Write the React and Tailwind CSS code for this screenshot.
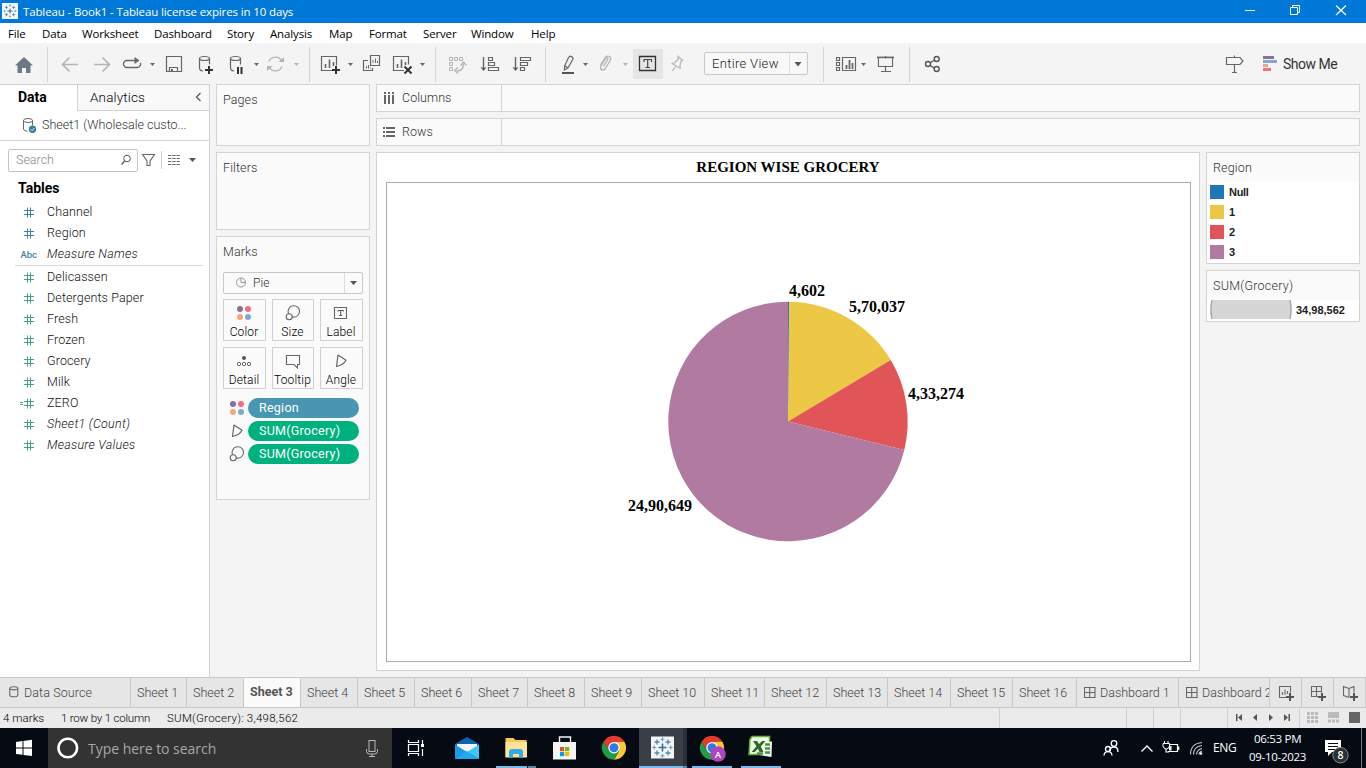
import React from "react";

/* Icon cell: the drawing inside uses window coordinates, x/y give the cell origin. */
function Cell({ x, y, w, h, children, className = "" }) {
  return (
    <svg width={w} height={h} viewBox={`${x} ${y} ${w} ${h}`} className={`block shrink-0 ${className}`} fill="none">
      {children}
    </svg>
  );
}

/* Toolbar cell, as tall as the toolbar. */
function Tool({ x, to, children }) {
  return <Cell x={x} y={43} w={to - x} h={41}>{children}</Cell>;
}

/* Taskbar cell, as tall as the taskbar. */
function Task({ x, to, children, className }) {
  return <Cell x={x} y={728} w={to - x} h={40} className={className}>{children}</Cell>;
}

const Caret = ({ x, y = 63, c = "#666" }) => <path d={`M${x} ${y}h5l-2.5 3z`} fill={c} />;
const Rule = ({ x }) => <path d={`M${x + 0.5} 47v35`} stroke="#d4d4d4" />;

function TableauMark({ x, y, s = 1 }) {
  const plus = (cx, cy, r, c, w = 1) => (
    <path d={`M${cx - r} ${cy}h${2 * r}M${cx} ${cy - r}v${2 * r}`} stroke={c} strokeWidth={w} />
  );
  return (
    <g transform={`translate(${x} ${y}) scale(${s})`}>
      {plus(0, 0, 3.6, "#2f6f9f", 1.4)}
      {plus(0, -7.5, 1.8, "#6f9fc0")}
      {plus(0, 7.5, 1.8, "#6f9fc0")}
      {plus(-7.5, 0, 1.8, "#6f9fc0")}
      {plus(7.5, 0, 1.8, "#6f9fc0")}
      {plus(-5, -5, 2.3, "#4c8bb5", 1.2)}
      {plus(5, -5, 2.3, "#4c8bb5", 1.2)}
      {plus(-5, 5, 2.3, "#4c8bb5", 1.2)}
      {plus(5, 5, 2.3, "#4c8bb5", 1.2)}
    </g>
  );
}

function TitleBar() {
  return (
    <div className="flex h-[23px] items-center bg-[#0078d7] font-['Open_Sans',sans-serif] text-[11.5px] text-white">
      <Cell x={0} y={0} w={23} h={23}>
        <rect x="2" y="3" width="16" height="16" fill="#f6f8fa" />
        <TableauMark x={10} y={11} s={0.72} />
      </Cell>
      <span className="grow whitespace-nowrap tracking-[-0.13px]">Tableau - Book1 - Tableau license expires in 10 days</span>
      <Cell x={1230} y={0} w={136} h={23}>
        <path d="M1245 10.5h10" stroke="#fff" />
        <path d="M1290.5 7.5h7v7h-7zM1292.5 7.500v-2h7v7h-2" stroke="#fff" />
        <path d="M1336 5.500l10 9.500M1346 5.500l-10 9.500" stroke="#fff" strokeWidth="1.200" />
      </Cell>
    </div>
  );
}

function MenuBar() {
  const cls = "shrink-0 whitespace-nowrap";
  return (
    <div className="flex h-5 items-center bg-white pl-2 pt-0.5 font-['Open_Sans',sans-serif] text-[11.5px] tracking-[-0.15px] text-black">
      <span className={`${cls} w-[34px]`}>File</span>
      <span className={`${cls} w-10`}>Data</span>
      <span className={`${cls} w-[72px]`}>Worksheet</span>
      <span className={`${cls} w-[73px]`}>Dashboard</span>
      <span className={`${cls} w-[43px]`}>Story</span>
      <span className={`${cls} w-[59px]`}>Analysis</span>
      <span className={`${cls} w-10`}>Map</span>
      <span className={`${cls} w-[54px]`}>Format</span>
      <span className={`${cls} w-12`}>Server</span>
      <span className={`${cls} w-[60px]`}>Window</span>
      <span className={cls}>Help</span>
    </div>
  );
}

function Toolbar() {
  const d = "#666";
  const l = "#b4b4b4";
  return (
    <div className="flex h-[41px] items-center bg-[#f4f4f4]">
      <Tool x={0} to={55}>
        <path d="M24 57l9 8.500h-2.500v7.500h-4.500v-5h-4v5h-4.500v-7.500H15z" fill="#6b7785" />
        <Rule x={47} />
      </Tool>
      <Tool x={55} to={86}><path d="M62.500 64.500h15.500M69.500 57.500l-7 7 7 7" stroke={l} strokeWidth="1.600" /></Tool>
      <Tool x={86} to={117}><path d="M94 64.500h15.500M102.500 57.500l7 7-7 7" stroke={l} strokeWidth="1.600" /></Tool>
      <Tool x={117} to={160}>
        <path d="M136 60.500h-9a3.500 3.500 0 0 0 0 7h10a3.500 3.500 0 0 0 3.500-4.500" stroke={d} strokeWidth="1.400" />
        <path d="M134.500 57l5 3.500-5 3.500z" fill={d} />
        <Caret x={150} />
      </Tool>
      <Tool x={160} to={190}>
        <path d="M166.500 56.500h15v15h-15zM169.500 71.500v-4h8v4" stroke={d} strokeWidth="1.200" />
        <path d="M171 69h2v2.500h-2z" fill={d} />
      </Tool>
      <Tool x={190} to={222}>
        <path d="M199.500 58.500v9.500q0 2.500 3.500 3M209.500 58.500v6" stroke={d} strokeWidth="1.200" />
        <ellipse cx="204.500" cy="58.500" rx="5" ry="2" stroke={d} strokeWidth="1.200" />
        <path d="M205 70h8M209 66v8" stroke="#333" strokeWidth="2" />
      </Tool>
      <Tool x={222} to={262}>
        <path d="M230.500 58.500v9.500q0 2.500 3.500 3M240.500 58.500v6" stroke={d} strokeWidth="1.200" />
        <ellipse cx="235.500" cy="58.500" rx="5" ry="2" stroke={d} strokeWidth="1.200" />
        <path d="M238 67v7M241.500 67v7" stroke="#333" strokeWidth="2" />
        <Caret x={254} />
      </Tool>
      <Tool x={262} to={302}>
        <path d="M269 61.500a7 7 0 0 1 12.800-.5M282 66.500a7 7 0 0 1-12.800.5" stroke={l} strokeWidth="1.300" />
        <path d="M278.500 62h5.500v-5zM272.500 66H267v5z" fill={l} />
        <Caret x={294} c={l} />
      </Tool>
      <Tool x={302} to={356}>
        <Rule x={309} />
        <path d="M333 70.500h-11.500v-14h15v9" stroke={d} strokeWidth="1.200" />
        <path d="M325.500 64v4M329.500 59.500v8.500M333.500 62v4" stroke={d} strokeWidth="1.600" />
        <path d="M332 70h8M336 66v8" stroke="#333" strokeWidth="2" />
        <Caret x={348} />
      </Tool>
      <Tool x={356} to={386}>
        <path d="M370.500 55.500h9v10h-9zM368 60.500h-4.500v10h9v-2.500" stroke={d} strokeWidth="1.200" />
        <path d="M373 60v3M375.500 58.500v4.500M377.500 61v2M366.500 66v2.500M368.500 65v3.500M370.500 67.500v1" stroke={d} />
      </Tool>
      <Tool x={386} to={442}>
        <path d="M404 70.500h-10.500v-14h15v8" stroke={d} strokeWidth="1.200" />
        <path d="M397.500 64v4M401.500 59.500v8.500M405.500 62v3" stroke={d} strokeWidth="1.600" />
        <path d="M404.500 66.500l7 7M411.500 66.500l-7 7" stroke="#333" strokeWidth="2" />
        <Caret x={420} />
        <Rule x={435} />
      </Tool>
      <Tool x={442} to={474}>
        <path d="M449.500 57.500h3v3h-3zM454.500 57.500h3v3h-3zM459.500 57.500h3v3h-3zM449.500 62.500h3v3h-3zM449.500 67.500h3v3h-3z" stroke={l} />
        <path d="M456.500 71q7 0 7-7.500" stroke={l} strokeWidth="1.400" />
        <path d="M460.500 65.500l3-3.500 3 3.500M458 67.500l-3.500 3 3.500 3" stroke={l} strokeWidth="1.300" />
      </Tool>
      <Tool x={474} to={506}>
        <path d="M483.500 57v13" stroke={d} strokeWidth="1.400" /><path d="M480.500 67.500h6l-3 3.500z" fill={d} />
        <path d="M488.500 57.500h4v3h-4zM488.500 62.500h6v3h-6zM488.500 67.500h10v3h-10z" stroke={d} strokeWidth="1.200" />
      </Tool>
      <Tool x={506} to={554}>
        <path d="M515.500 57v13" stroke={d} strokeWidth="1.400" /><path d="M512.500 67.500h6l-3 3.500z" fill={d} />
        <path d="M520.500 57.500h10v3h-10zM520.500 62.500h7v3h-7zM520.500 67.500h4v3h-4z" stroke={d} strokeWidth="1.200" />
        <Rule x={545} />
      </Tool>
      <Tool x={554} to={592}>
        <path d="M568.500 57.500q1.500-2 3.300-.8t.9 3.100l-4.700 8-3.600 2.200.3-4.200zM564.700 65.800l3.300 2" stroke={d} strokeWidth="1.200" />
        <path d="M562 73h12" stroke="#555" strokeWidth="2" />
        <Caret x={583} />
      </Tool>
      <Tool x={592} to={633}>
        <path d="M603.500 66.500l4-6.500q1-1.200-.2-1.800t-2 .6l-4.500 7.400q-1 2.800 1 3.600t3.600-1.300l5-8.200q1-2.600-1-3.800t-4 .8l-5 8" stroke={l} strokeWidth="1.300" />
        <Caret x={623} c={l} />
      </Tool>
      <div className="h-[30px] w-[30px] shrink-0 bg-[#e5e5e5]">
        <Cell x={633} y={49} w={30} h={30}>
          <path d="M639.500 56.500h16v14h-16z" stroke="#333" strokeWidth="1.300" />
          <path d="M644 62v-2.500h7.500v2.500M647.700 59.500v8M645.500 67.500h4.500" stroke="#444" strokeWidth="1.200" />
        </Cell>
      </div>
      <Tool x={663} to={704}>
        <path d="M678 56.500l4.500 4-1.500.8-1 4.200.2 2.700-8-4.500 2.500-1 3.500-3.500zM675.500 66.500l-3 4.500" stroke={l} strokeWidth="1.200" />
      </Tool>
      <div className="flex h-[23px] w-[104px] shrink-0 rounded-xs border border-[#c8c8c8] bg-[#f8f8f8] font-[Roboto,sans-serif]">
        <span className="w-[85px] border-r border-[#ddd] pl-[7px] text-[13px] font-light leading-[21px] tracking-[0.32px] text-[#222]">Entire View</span>
        <Cell x={790} y={53} w={16} h={21}><path d="M794.500 62h7l-3.500 4.500z" fill="#555" /></Cell>
      </div>
      <Tool x={808} to={870}>
        <Rule x={823} />
        <path d="M836.500 57.500h3v3h-3zM836.500 62.500h3v3h-3zM836.500 67.500h3v3h-3zM842.500 57.500h13v13h-13z" stroke={d} strokeWidth="1.200" />
        <path d="M846.500 65v4M849.500 60v9M852.500 63v6" stroke={d} strokeWidth="1.800" />
        <Caret x={861} />
      </Tool>
      <Tool x={870} to={917}>
        <path d="M877 57.500h17" stroke={d} strokeWidth="1.800" />
        <path d="M878.500 58v8.500h14V58M885.500 56v15M881 71.500h10" stroke={d} strokeWidth="1.200" />
        <path d="M879.200 58.500h12.700v7.300h-12.700z" fill="#f4f4f4" />
        <Rule x={909} />
      </Tool>
      <Tool x={917} to={950}>
        <path d="M930 63l4.700-3M930 65.300l4.700 3.200" stroke="#555" strokeWidth="1.300" />
        <circle cx="928" cy="64" r="2.500" stroke="#555" strokeWidth="1.400" />
        <circle cx="936.700" cy="59" r="2.500" stroke="#555" strokeWidth="1.400" />
        <circle cx="936.700" cy="69" r="2.500" stroke="#555" strokeWidth="1.400" />
      </Tool>
      <div className="grow" />
      <Tool x={1220} to={1255}>
        <path d="M1226.500 57.500h13.500l3 3.500-3 3.500h-13.500zM1234.500 55.500v2M1234.500 64.500v8M1232 72.500h5" stroke={d} strokeWidth="1.200" />
      </Tool>
      <Tool x={1255} to={1283}>
        <path d="M1263 56h11v3h-11z" fill="#87709a" />
        <path d="M1263 60h14v3h-14z" fill="#83a6d1" />
        <path d="M1263 64h5v3h-5z" fill="#f4a583" />
        <path d="M1263 68h8v3h-8z" fill="#f76b83" />
      </Tool>
      <span className="w-[83px] shrink-0 whitespace-nowrap pt-px font-[Roboto,sans-serif] text-[14px] tracking-[-0.5px] text-[#333]">Show Me</span>
    </div>
  );
}

function Field({ name, kind = "measure", italic }) {
  return (
    <div className="flex h-[21px] items-center text-[12.5px] text-[#111]">
      <span className="flex w-[47px] shrink-0 justify-end pr-[11px]">
        {kind === "abc" ? (
          <span className="-mr-px pt-0.5 text-[9.5px] font-medium text-[#4a8199]">Abc</span>
        ) : (
          <svg width="18" height="16" viewBox="-5 1 18 16" fill="none" className={kind === "dimension" ? "stroke-[#3b84a0]" : "stroke-[#3fa580]"}>
            <path d="M4.500 3.500v10M7.500 3.500v10M1 6.500h10M1 10.500h10" />
            {kind === "calc" && <path d="M-3 7.500h3M-3 9.500h3" />}
          </svg>
        )}
      </span>
      <span className={italic ? "italic whitespace-nowrap pb-px tracking-[0.25px]" : "whitespace-nowrap pb-px tracking-[0.12px]"}>{name}</span>
    </div>
  );
}

function DataPane() {
  return (
    <div className="flex w-[210px] shrink-0 flex-col border-r border-t border-[#d0d0d0] bg-white">
      <div className="flex h-[26px]">
        <div className="w-[77px] pl-[18px] text-[14px] font-bold leading-[25px] text-black">Data</div>
        <div className="flex grow items-center border-b border-l border-[#d4d4d4] bg-[#f9f9f9] pl-3 text-[13.5px] font-light tracking-[0.15px] text-black">
          <span className="grow">Analytics</span>
          <svg width="16" height="16" viewBox="0 0 16 16" fill="none" className="mr-0.5"><path d="M9.500 3L5.500 7l4 4" stroke="#555" strokeWidth="1.200" /></svg>
        </div>
      </div>
      <div className="flex h-[30px] items-center border-b border-[#d4d4d4] text-[12.5px] font-light text-[#333]">
        <Cell x={0} y={111} w={42} h={29} className="shrink-0">
          <path d="M23.500 120.500v8.500q0 2 4 2.300M32.500 120.500v5" stroke="#666" />
          <ellipse cx="28" cy="120.500" rx="4.500" ry="2" stroke="#666" />
          <circle cx="32.500" cy="129.300" r="3.700" fill="#3b7f9f" />
          <path d="M30.800 129.300l1.300 1.300 2.200-2.400" stroke="#fff" strokeWidth=".9" />
        </Cell>
        <span className="whitespace-nowrap">Sheet1 (Wholesale custo...</span>
      </div>
      <div className="flex h-[38px] items-center pl-2">
        <div className="flex h-[23px] w-[130px] items-center rounded-xs border border-[#c4c4c4] pl-[7px] text-[12.5px] font-light text-[#888]">
          <span className="grow">Search</span>
          <svg width="16" height="16" viewBox="0 0 16 16" fill="none" className="mr-[3px]"><circle cx="9" cy="6.500" r="3.300" stroke="#555" /><path d="M6.700 9l-3.200 3.500" stroke="#555" strokeWidth="1.200" /></svg>
        </div>
        <Cell x={138} y={141} w={71} h={38}>
          <path d="M142.500 154.500h12l-4.500 6.500v4.500h-3V161z" stroke="#666" strokeWidth="1.100" />
          <path d="M161.500 151v18" stroke="#ccc" />
          <path d="M168 155.500h12M168 158.500h12M168 161.500h12M168 164.500h12" stroke="#666" strokeDasharray="3.300 1" />
          <path d="M189 158h7l-3.500 4z" fill="#555" />
        </Cell>
      </div>
      <div className="h-[23px] pl-[18px] text-[14px] font-bold leading-[18px] text-black">Tables</div>
      <div className="font-light">
        <Field name="Channel" kind="dimension" />
        <Field name="Region" kind="dimension" />
        <Field name="Measure Names" kind="abc" italic />
        <div className="ml-[15px] mr-1.5 h-[2px] border-t border-[#d8d8d8]" />
        <Field name="Delicassen" />
        <Field name="Detergents Paper" />
        <Field name="Fresh" />
        <Field name="Frozen" />
        <Field name="Grocery" />
        <Field name="Milk" />
        <Field name="ZERO" kind="calc" />
        <Field name="Sheet1 (Count)" italic />
        <Field name="Measure Values" italic />
      </div>
    </div>
  );
}

const Dots = () => (
  <>
    <circle cx="4" cy="4" r="3" fill="#87709a" />
    <circle cx="12" cy="4" r="3" fill="#f76b83" />
    <circle cx="4" cy="12" r="3" fill="#f4a57a" />
    <circle cx="12" cy="12" r="3" fill="#83a6d1" />
  </>
);
const SizeIcon = () => (
  <g stroke="#666" strokeWidth="1.100">
    <path d="M3.600 8.700A5.700 5.700 0 1 1 7.200 11.900" /><circle cx="4.200" cy="11.800" r="3" />
  </g>
);
const AngleIcon = () => <path d="M5 2l8 5.200q-2.500 4.800-9.500 6.300z" stroke="#666" strokeWidth="1.200" strokeLinejoin="round" />;

function Icon16({ children, className = "" }) {
  return <svg width="16" height="16" viewBox="0 0 16 16" fill="none" className={`block shrink-0 ${className}`}>{children}</svg>;
}

function MarkButton({ label, children }) {
  return (
    <div className="flex h-[42px] flex-col items-center border border-[#d0d0d0] bg-[#fbfbfb] pr-px pt-[5px] text-[12px] font-light leading-[17px] tracking-[0.15px] text-black">
      <Icon16>{children}</Icon16>
      <span className="mt-[3px] whitespace-nowrap">{label}</span>
    </div>
  );
}

function Pill({ icon, label, region }) {
  return (
    <div className="flex h-5 items-center">
      <Icon16 className="mr-[3px]">{icon}</Icon16>
      <span className={`flex h-5 w-[111px] items-center rounded-full pl-[11px] text-[12.5px] tracking-[0.25px] text-white ${region ? "bg-[#4996b2]" : "bg-[#00b180]"}`}>{label}</span>
    </div>
  );
}

function Cards() {
  const card = "border border-[#d4d4d4] bg-[#fafafa] pl-1.5 text-[12.5px] font-light tracking-[0.1px] text-[#333]";
  return (
    <div className="ml-1.5 flex w-[154px] shrink-0 flex-col gap-1.5">
      <div className={`${card} h-[62px] pt-1.5`}>Pages</div>
      <div className={`${card} h-[78px] pt-1.5`}>Filters</div>
      <div className={`${card} h-[264px] pt-1.5`}>
        <div className="h-[29px]">Marks</div>
        <div className="flex h-[22px] w-[140px] items-center rounded-xs border border-[#c8c8c8] text-[12px]">
          <Icon16 className="ml-[9px]"><circle cx="8" cy="7.500" r="4.500" stroke="#999" /><path d="M8 3v4.500h4.500" stroke="#999" /></Icon16>
          <span className="ml-1 grow">Pie</span>
          <span className="flex h-5 w-[18px] items-center justify-center border-l border-[#ddd]">
            <svg width="7" height="4" viewBox="0 0 7 4"><path d="M0 0h7L3.500 4z" fill="#555" /></svg>
          </span>
        </div>
        <div className="mt-[5px] grid w-[140px] grid-cols-[43px_42px_43px] gap-1.5">
          <MarkButton label="Color"><Dots /></MarkButton>
          <MarkButton label="Size"><SizeIcon /></MarkButton>
          <MarkButton label="Label"><path d="M1.500 2.500h12v11h-12z" stroke="#666" strokeWidth="1.100" /><path d="M5 6.500V5.500h5.500v1M7.700 5.500v5M6.200 10.500h3" stroke="#555" /></MarkButton>
          <MarkButton label="Detail"><circle cx="8" cy="5" r="2" fill="#555" /><circle cx="3" cy="11" r="1.700" stroke="#666" /><circle cx="8" cy="11" r="1.700" stroke="#666" /><circle cx="13" cy="11" r="1.700" stroke="#666" /></MarkButton>
          <MarkButton label="Tooltip"><path d="M1.500 2.500h13v9h-2v3.500l-3.500-3.500H1.500z" stroke="#666" strokeWidth="1.100" /></MarkButton>
          <MarkButton label="Angle"><AngleIcon /></MarkButton>
        </div>
        <div className="mt-[9px] flex flex-col gap-[3px] pl-1.5 font-normal">
          <Pill icon={<Dots />} label="Region" region />
          <Pill icon={<AngleIcon />} label="SUM(Grocery)" />
          <Pill icon={<SizeIcon />} label="SUM(Grocery)" />
        </div>
      </div>
    </div>
  );
}

function Shelf({ label, children }) {
  return (
    <div className="flex h-7 border border-[#d4d4d4] bg-[#fafafa] text-[12.5px] font-light text-[#333]">
      <div className="flex w-[125px] items-center border-r border-[#d4d4d4] pl-[6px]">
        <svg width="12" height="12" viewBox="0 0 12 12" className="mr-[7px]" fill="#666">{children}</svg>
        <span className="tracking-[0.05px]">{label}</span>
      </div>
    </div>
  );
}

const SLICES = [
  { value: 4602, color: "#1f77b4" },
  { value: 570037, color: "#ecc846" },
  { value: 433274, color: "#e15558" },
  { value: 2490649, color: "#b07aa1" },
];

function Pie() {
  const total = SLICES.reduce((s, d) => s + d.value, 0);
  const pt = (v) => {
    const a = (v / total) * 2 * Math.PI;
    return `${(401 + 119.7 * Math.sin(a)).toFixed(3)} ${(238.5 - 119.7 * Math.cos(a)).toFixed(3)}`;
  };
  let acc = 0;
  return (
    <svg width="803" height="478" viewBox="0 0 803 478" className="block font-['Liberation_Serif',serif] text-[16px] font-bold" fill="#000">
      {SLICES.map((s) => {
        const from = acc;
        acc += s.value;
        return <path key={s.value} fill={s.color} d={`M401 238.500L${pt(from)}A119.700 119.700 0 ${s.value > total / 2 ? 1 : 0} 1 ${pt(acc)}Z`} />;
      })}
      <path d="M401 119h1l-.5 60-.3 40H401z" fill="#1f77b4" fillOpacity=".7" />
      <text x="402" y="113">4,602</text>
      <text x="462" y="129">5,70,037</text>
      <text x="521" y="216">4,33,274</text>
      <text x="241" y="328">24,90,649</text>
    </svg>
  );
}

function View() {
  return (
    <div className="flex h-[519px] w-[824px] shrink-0 flex-col border border-[#d4d4d4] bg-white px-[9px]">
      <div className="h-[29px] text-center font-['Liberation_Serif',serif] text-[15px] font-bold leading-[28px] text-black">REGION WISE GROCERY</div>
      <div className="h-[480px] w-[805px] border border-[#aaa]"><Pie /></div>
    </div>
  );
}

function Legends() {
  const item = "flex h-5 items-center gap-[5px] pl-[3px]";
  const sw = "size-3.5";
  return (
    <div className="flex w-[154px] shrink-0 flex-col gap-1.5 text-[12.5px] font-light text-[#333]">
      <div className="h-28 border border-[#d4d4d4] bg-white">
        <div className="h-[29px] bg-[#fafafa] pl-1.5 leading-[29px] tracking-[0.15px]">Region</div>
        <div className="font-['Liberation_Sans',sans-serif] text-[11px] font-bold tracking-[-0.3px] text-[#222]">
          <div className={item}><i className={`${sw} bg-[#1f77b4]`} />Null</div>
          <div className={item}><i className={`${sw} bg-[#ecc846]`} />1</div>
          <div className={item}><i className={`${sw} bg-[#e15558]`} />2</div>
          <div className={item}><i className={`${sw} bg-[#b07aa1]`} />3</div>
        </div>
      </div>
      <div className="h-[52px] border border-[#d4d4d4] bg-white">
        <div className="h-[29px] bg-[#fafafa] pl-1.5 leading-[29px] tracking-[0.25px]">SUM(Grocery)</div>
        <div className="flex items-center pl-[3px] font-['Liberation_Sans',sans-serif] text-[11px] font-bold text-[#222]">
          <svg width="82" height="19" viewBox="0 0 82 19" fill="none" className="mr-1">
            <path d="M2.500 0h77q2 9.500 0 19h-77q-2-9.500 0-19z" fill="#d6d6d6" />
            <path d="M2 0q-2 9.500 0 19M80 0q2 9.500 0 19" stroke="#aaa" strokeWidth="1.600" />
          </svg>
          <span className="pt-0.5">34,98,562</span>
        </div>
      </div>
    </div>
  );
}

function GridGlyph() {
  return <svg width="12" height="12" viewBox="0 0 12 12" fill="none" className="mr-1 shrink-0"><path d="M.5.500h10.500v10H.5zM5.700.500v10M.5 5.500h10.500" stroke="#666" strokeWidth="1.100" /></svg>;
}

function SheetTabs() {
  const t = "flex shrink-0 items-center overflow-hidden whitespace-nowrap border-r border-[#c8c8c8] pl-[6px]";
  return (
    <div className="flex h-[31px] border-b border-t border-[#c8c8c8] bg-[#e6e6e6] font-[Roboto,sans-serif] text-[12.5px] font-light text-[#444]">
      <div className={`${t} w-[131px]`}>
        <svg width="10" height="12" viewBox="0 0 10 12" fill="none" className="mb-px ml-[3px] mr-[5px]"><path d="M.8 2.500v6.500q0 1.800 4 1.800t4-1.800V2.500" stroke="#666" strokeWidth="1.100" /><ellipse cx="4.800" cy="2.300" rx="4" ry="1.600" stroke="#666" strokeWidth="1.100" /></svg>
        <span className="pt-px tracking-[0.1px]">Data Source</span>
      </div>
      <div className={`${t} w-14 pt-0.5`}>Sheet 1</div>
      <div className={`${t} w-[57px] pt-0.5`}>Sheet 2</div>
      <div className={`${t} w-[57px] bg-[#fafafa] pb-px pl-[5px] font-bold text-[#555]`}>Sheet 3</div>
      <div className={`${t} w-[57px] pt-0.5`}>Sheet 4</div>
      <div className={`${t} w-[57px] pt-0.5`}>Sheet 5</div>
      <div className={`${t} w-[57px] pt-0.5`}>Sheet 6</div>
      <div className={`${t} w-14 pt-0.5`}>Sheet 7</div>
      <div className={`${t} w-[57px] pt-0.5`}>Sheet 8</div>
      <div className={`${t} w-[57px] pt-0.5`}>Sheet 9</div>
      <div className={`${t} w-[63px] pt-0.5`}>Sheet 10</div>
      <div className={`${t} w-[60px] pt-0.5`}>Sheet 11</div>
      <div className={`${t} w-[62px] pt-0.5`}>Sheet 12</div>
      <div className={`${t} w-[61px] pt-0.5`}>Sheet 13</div>
      <div className={`${t} w-[63px] pt-0.5`}>Sheet 14</div>
      <div className={`${t} w-[62px] pt-0.5`}>Sheet 15</div>
      <div className={`${t} w-16 pt-0.5`}>Sheet 16</div>
      <div className={`${t} w-[102px] pl-[7px]`}><GridGlyph /><span className="pt-px">Dashboard 1</span></div>
      <div className={`${t} w-[91px] pl-[7px]`}><GridGlyph /><span className="pt-px">Dashboard 2</span></div>
      <Cell x={1270} y={678} w={96} h={29}>
        <path d="M1286 697.500h-6.500v-11h11v6M1282.500 692v3M1285 689.500v5.500M1287.500 691v3" stroke="#666" strokeWidth="1.100" />
        <path d="M1286 697h8M1290 693v8" stroke="#555" strokeWidth="2" />
        <path d="M1301.500 678v29M1333.500 678v29M1365.500 678v29" stroke="#c8c8c8" />
        <path d="M1318 696.500h-6.500v-10h10v6M1316.500 686.500v10M1311.500 691.500h10" stroke="#666" strokeWidth="1.100" />
        <path d="M1318 697h8M1322 693v8" stroke="#555" strokeWidth="2" />
        <path d="M1349 697.500l-5.500-2v-9l5.500 2 5-2v6M1349 688.500v9" stroke="#666" strokeWidth="1.100" />
        <path d="M1350 697h8M1354 693v8" stroke="#555" strokeWidth="2" />
      </Cell>
    </div>
  );
}

function StatusBar() {
  return (
    <div className="flex h-5 items-center bg-[#ebebeb] pl-[3px] font-[Roboto,sans-serif] text-[11.5px] font-light text-black">
      <span className="w-[58px] shrink-0 pt-0.5 tracking-[0.05px]">4 marks</span>
      <span className="w-[106px] shrink-0 pt-0.5 tracking-[-0.2px]">1 row by 1 column</span>
      <span className="grow pt-0.5 tracking-[0.25px]">SUM(Grocery): 3,498,562</span>
      <Cell x={990} y={708} w={376} h={20}>
        <path d="M999.500 708v20M1126.500 708v20M1153.500 708v20M1180.500 708v20M1227.500 708v20M1299.500 708v20" stroke="#d0d0d0" />
        <path d="M1236 714h1.500v7h-1.500zM1242 714v7l-4-3.500zM1257 714v7l-4-3.500zM1269 714v7l4-3.500zM1284 714v7l4-3.500zM1288.500 714h1.500v7h-1.500z" fill="#555" />
        <path d="M1307 713.500h11M1307 717.500h11M1307 721.500h11" stroke="#bbb" strokeWidth="3" strokeDasharray="3 1" />
        <path d="M1328 712h11v6h-11z" fill="#bbb" />
        <path d="M1328 721h11" stroke="#bbb" strokeWidth="3" strokeDasharray="3 1" />
        <path d="M1349 712h11v11h-11z" fill="#666" />
      </Cell>
    </div>
  );
}

function Chrome({ x, y, r }) {
  return (
    <g transform={`translate(${x} ${y}) scale(${r / 12})`}>
      <path d="M-10.400-6A12 12 0 0 1 10.400-6L0-5.500-5.200 3z" fill="#e33b2e" />
      <path d="M10.400-6A12 12 0 0 1 0 12L5.200 3 1-5.700z" fill="#fcc934" />
      <path d="M0 12A12 12 0 0 1-10.400-6L-5 3H5z" fill="#1e9e4a" />
      <circle r="5.700" fill="#fff" />
      <circle r="4.500" fill="#2f78ea" />
    </g>
  );
}

function Taskbar() {
  return (
    <div className="flex h-10 items-center bg-[#060b13] font-['Open_Sans',sans-serif] text-white">
      <Task x={0} to={48}>
        <path d="M16 742l6.500-.9v6.400H16zM23.500 741l8.500-1.200v7.700h-8.500zM16 748.500h6.500v6.300l-6.500-.9zM23.500 748.500h8.500v7.600l-8.500-1.200z" fill="#fff" />
      </Task>
      <div className="flex h-10 w-[344px] shrink-0 items-center bg-[#333]">
        <Task x={48} to={88}><circle cx="67.800" cy="748" r="9.300" stroke="#fff" strokeWidth="2.600" /></Task>
        <span className="w-[268px] whitespace-nowrap text-[14px] tracking-[-0.03px] text-[#a8a8a8]">Type here to search</span>
        <Task x={356} to={392}>
          <rect x="369" y="740.500" width="6" height="11" stroke="#bbb" />
          <path d="M366.500 749v2.500q0 2.500 3 2.500h5q3 0 3-2.500V749M372 754v2.500M369 756.500h6" stroke="#bbb" />
        </Task>
      </div>
      <Task x={392} to={448}>
        <path d="M408.500 740v2.500h10V740M408.500 744.500h10v7h-10zM408.500 756v-2.500h10v2.500M422.500 740v5.500M422.500 749v7" stroke="#fff" strokeWidth="1.200" />
        <rect x="421" y="744" width="3" height="3" fill="#fff" />
      </Task>
      <Task x={448} to={496}>
        <path d="M455 744l12-7 12 7v15h-24z" fill="#0c63b0" />
        <path d="M457 744h20v8l-10 5-10-5z" fill="#f4f4f4" />
        <path d="M455 744.500l12 7.500-12 7z" fill="#1a9be8" />
        <path d="M479 744.500l-12 7.500 12 7z" fill="#3fc6f5" />
        <path d="M455 759l12-8 12 8z" fill="#21a8ee" />
      </Task>
      <Task x={496} to={544}>
        <path d="M505.500 738h8l2 2h11v17h-21z" fill="#f3cb55" />
        <path d="M505.500 742h21.500v15.500h-21.500z" fill="#fde395" />
        <path d="M509 758v-6q0-3 3-3h8q3 0 3 3v6h-4v-4h-6v4z" fill="#35a9e6" />
        <path d="M496 766h31v2h-31z" fill="#76b9ed" /><path d="M528 766h8v2h-8z" fill="#5488b0" />
      </Task>
      <Task x={544} to={592}>
        <path d="M559.500 743v-6h11v6" stroke="#f5f5f5" strokeWidth="1.400" />
        <path d="M553 742h23v17.500h-23z" fill="#f5f5f5" />
        <path d="M560 747h4.200v4.200H560z" fill="#e64f22" /><path d="M565 747h4.200v4.200H565z" fill="#7db900" />
        <path d="M560 752h4.200v4.200H560z" fill="#00a1ef" /><path d="M565 752h4.200v4.200H565z" fill="#feb800" />
      </Task>
      <Task x={592} to={639}><Chrome x={614} y={747.8} r={12} /></Task>
      <Task x={639} to={688}>
        <path d="M639 728h44v40h-44z" fill="#3a3f47" /><path d="M683 728h4v40h-4z" fill="#2a2f37" />
        <path d="M639 766h44v2h-44z" fill="#76b9ed" /><path d="M683 766h4v2h-4z" fill="#5488b0" />
        <path d="M651 736.500h23v22h-23z" fill="#f4f4f4" />
        <TableauMark x={662.5} y={747.5} s={1.1} />
      </Task>
      <Task x={688} to={736}>
        <Chrome x={712} y={747.8} r={12} />
        <circle cx="718" cy="754" r="7.800" fill="#ab47bc" />
        <text x="718" y="757.500" textAnchor="middle" fontSize="9" fontWeight="600" fill="#fff">A</text>
        <path d="M692 766h40v2h-40z" fill="#76b9ed" />
      </Task>
      <Task x={736} to={790}>
        <path d="M752 736.500h17.500v18H749l1-15z" fill="#f2f8ec" stroke="#5cb531" strokeWidth="1.500" />
        <path d="M764 742l8-.5-.5 15.500-12-2 2-12z" fill="#f3f6ee" />
        <path d="M765 744.500h5M765 748.500h5M765 752.500h5M757 753.500h6" stroke="#4b9142" strokeWidth="2.600" />
        <path d="M753 741h4l2 3 3-3h3.500l-4.700 5.500 2.700 5.500h-4l-1.600-3.200-3 3.200h-3.400l5-5.700z" fill="#2c6b22" />
        <path d="M741 766h40v2h-40z" fill="#76b9ed" />
      </Task>
      <div className="grow" />
      <Task x={1096} to={1213}>
        <g stroke="#fff" strokeWidth="1.300">
          <circle cx="1114" cy="743.500" r="2.800" /><path d="M1109.500 751q.5-4 4.500-4t4 5" />
          <circle cx="1108" cy="749" r="2.500" /><path d="M1104 755.500q.3-3.800 4-3.800t4 3.800" />
          <path d="M1141.500 751.500l5.500-5.500 5.500 5.500" />
          <path d="M1170 744.500h7.500v7h-9.500" strokeWidth="1.200" /><path d="M1178.700 746.500v3.500" />
          <path d="M1164.500 741v3M1168 741v3M1166 748v4h3" strokeWidth="1.100" />
        </g>
        <path d="M1163 743.500h6.500v2.500q-.5 3-3.200 3t-3.300-3z" fill="#060b13" stroke="#fff" /><path d="M1169 746h2.500v4.500h-2.500z" fill="#fff" />
        <path d="M1190.500 754.500q0-11 11.500-12M1193.500 754.500q0-8 8.500-9M1196.500 754.500q.5-5 5.500-6M1199 754.500q0-2.500 3-3.500" stroke="#c8c8c8" strokeWidth="1.100" />
        <circle cx="1201" cy="753.500" r="1.300" fill="#fff" />
      </Task>
      <span className="w-9 shrink-0 text-[12px] tracking-[-0.4px]">ENG</span>
      <div className="w-[58px] shrink-0 whitespace-nowrap text-[11.5px] leading-[18px] tracking-[-0.3px]">
        <div className="pl-[5px]">06:53 PM</div>
        <div>09-10-2023</div>
      </div>
      <Task x={1307} to={1366}>
        <path d="M1325 740h16v12h-9l-4 4v-4h-3z" fill="#fff" />
        <path d="M1328 743.500h10M1328 746.500h10M1328 749.500h7" stroke="#060b13" />
        <circle cx="1340.500" cy="755.200" r="7.700" fill="#2b2f36" stroke="#8a8a8a" />
        <text x="1340.500" y="759" textAnchor="middle" fontSize="10.500" fontWeight="600" fill="#fff">8</text>
        <path d="M1361.500 728v40" stroke="#777" />
      </Task>
    </div>
  );
}

export default function App() {
  return (
    <div className="flex h-[768px] w-[1366px] flex-col overflow-hidden bg-[#f4f4f4]">
      <TitleBar />
      <MenuBar />
      <Toolbar />
      <div className="flex h-[593px] shrink-0 font-[Roboto,sans-serif]">
        <DataPane />
        <Cards />
        <div className="ml-1.5 flex w-[984px] shrink-0 flex-col gap-1.5">
          <Shelf label="Columns"><path d="M1 0h2v2H1zM1 3h2v9H1zM5 0h2v2H5zM5 3h2v9H5zM9 0h2v2H9zM9 3h2v9H9z" /></Shelf>
          <Shelf label="Rows"><path d="M0 1h2v2H0zM3 1h9v2H3zM0 5h2v2H0zM3 5h9v2H3zM0 9h2v2H0zM3 9h9v2H3z" /></Shelf>
          <div className="flex gap-1.5">
            <View />
            <Legends />
          </div>
        </div>
      </div>
      <SheetTabs />
      <StatusBar />
      <Taskbar />
    </div>
  );
}
